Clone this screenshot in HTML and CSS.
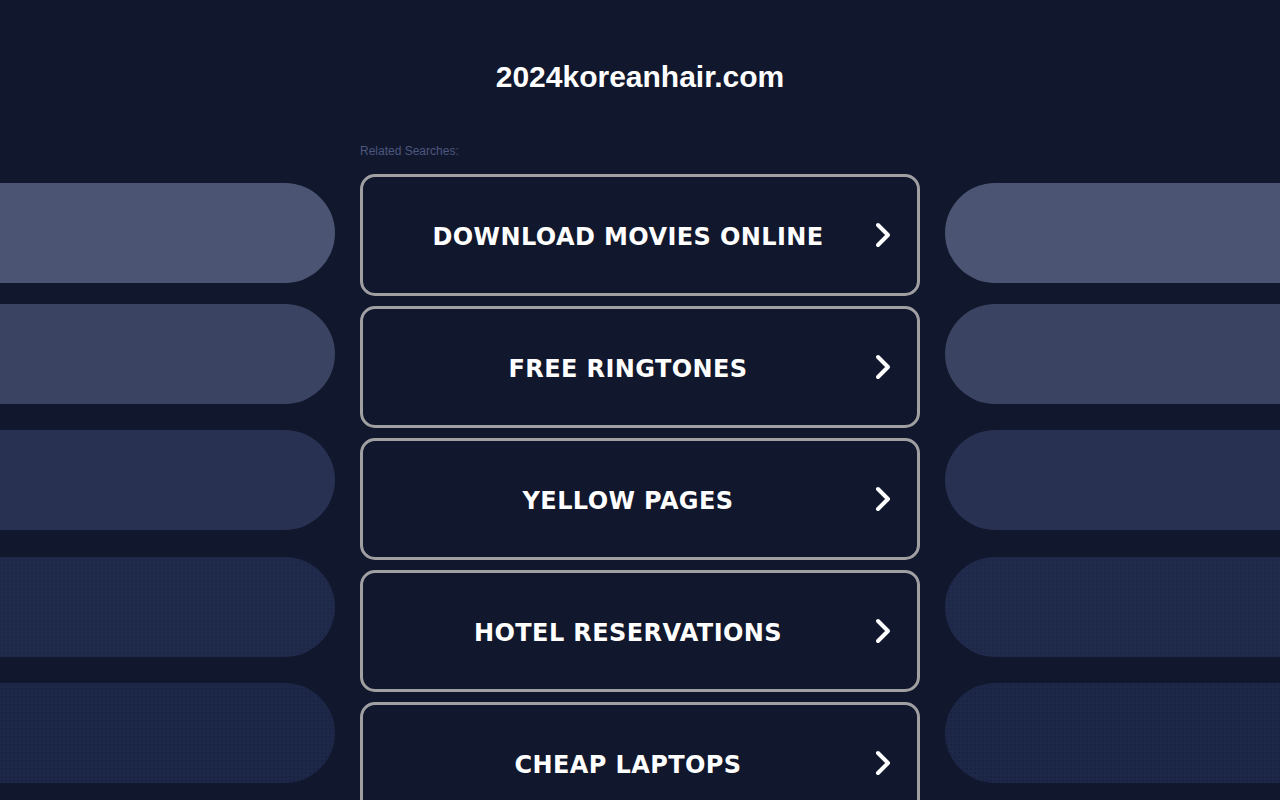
FILE: index.html
```html
<!DOCTYPE html>
<html lang="en">
<head>
<meta charset="utf-8">
<title>2024koreanhair.com</title>
<link rel="stylesheet" href="styles.css">
</head>
<body>
<h1 class="domain">2024koreanhair.com</h1>
<div class="layout">
  <div class="side side-left">
    <div class="pill p1"></div>
    <div class="pill p2"></div>
    <div class="pill p3"></div>
    <div class="pill p4"></div>
    <div class="pill p5"></div>
  </div>
  <div class="center">
    <div class="related">Related Searches:</div>
    <div class="links">
      <a class="link" href="#"><span class="label">DOWNLOAD MOVIES ONLINE</span><svg class="chev" viewBox="0 0 24 30" width="24" height="30"><polyline points="5,5 15,15 5,25"/></svg></a>
      <a class="link" href="#"><span class="label">FREE RINGTONES</span><svg class="chev" viewBox="0 0 24 30" width="24" height="30"><polyline points="5,5 15,15 5,25"/></svg></a>
      <a class="link" href="#"><span class="label">YELLOW PAGES</span><svg class="chev" viewBox="0 0 24 30" width="24" height="30"><polyline points="5,5 15,15 5,25"/></svg></a>
      <a class="link" href="#"><span class="label">HOTEL RESERVATIONS</span><svg class="chev" viewBox="0 0 24 30" width="24" height="30"><polyline points="5,5 15,15 5,25"/></svg></a>
      <a class="link" href="#"><span class="label">CHEAP LAPTOPS</span><svg class="chev" viewBox="0 0 24 30" width="24" height="30"><polyline points="5,5 15,15 5,25"/></svg></a>
    </div>
  </div>
  <div class="side side-right">
    <div class="pill p1"></div>
    <div class="pill p2"></div>
    <div class="pill p3"></div>
    <div class="pill p4"></div>
    <div class="pill p5"></div>
  </div>
</div>
</body>
</html>
```
FILE: styles.css
```css
html, body {
  margin: 0;
  padding: 0;
  background: #11172c;
  height: 800px;
  overflow: hidden;
}
body {
  font-family: "Liberation Sans", Arial, sans-serif;
  color: #fff;
}
.domain {
  margin: 0;
  padding-top: 60px;
  height: 34px;
  line-height: 34px;
  font-size: 30px;
  font-weight: bold;
  text-align: center;
  color: #fff;
}
.layout {
  margin-top: 46px;
  display: grid;
  grid-template-columns: 335px 560px 335px;
  column-gap: 25px;
  justify-content: space-between;
}
.side {
  display: flex;
  flex-direction: column;
  padding-top: 43px;
}
.pill {
  height: 100px;
  flex: none;
}
.side-left .pill { border-radius: 0 50px 50px 0; }
.side-right .pill { border-radius: 50px 0 0 50px; }
.pill.p1 { background: #4b5573; }
.pill.p2 { background: #3a4361; margin-top: 21px; }
.pill.p3 { background: #283152; margin-top: 26px; }
.pill.p4 {
  background-color: #1e2849;
  background-image: radial-gradient(rgba(60,75,120,0.18) 0.6px, transparent 0.9px);
  background-size: 4px 4px;
  margin-top: 27px;
}
.pill.p5 {
  background-color: #1d2748;
  background-image: radial-gradient(rgba(10,15,35,0.25) 0.6px, transparent 0.9px);
  background-size: 4px 4px;
  margin-top: 26px;
}
.center {
  display: flex;
  flex-direction: column;
}
.related {
  margin-top: 4px;
  height: 14px;
  line-height: 14px;
  font-size: 12px;
  color: #4d5880;
}
.links {
  margin-top: 16px;
  display: flex;
  flex-direction: column;
  gap: 10px;
}
.link {
  box-sizing: border-box;
  height: 122px;
  border: 3px solid #a0a0a3;
  border-radius: 15px;
  display: flex;
  align-items: center;
  padding: 0 20px;
  text-decoration: none;
  color: #fff;
  flex: none;
}
.label {
  flex: 1;
  text-align: center;
  font-family: "DejaVu Sans", Verdana, sans-serif;
  font-weight: bold;
  font-size: 24px;
  letter-spacing: 0.4px;
  margin-top: 4px;
}
.chev {
  flex: none;
  margin-top: 0;
}
.chev polyline {
  fill: none;
  stroke: #fff;
  stroke-width: 4;
  stroke-linecap: round;
  stroke-linejoin: round;
}
```
